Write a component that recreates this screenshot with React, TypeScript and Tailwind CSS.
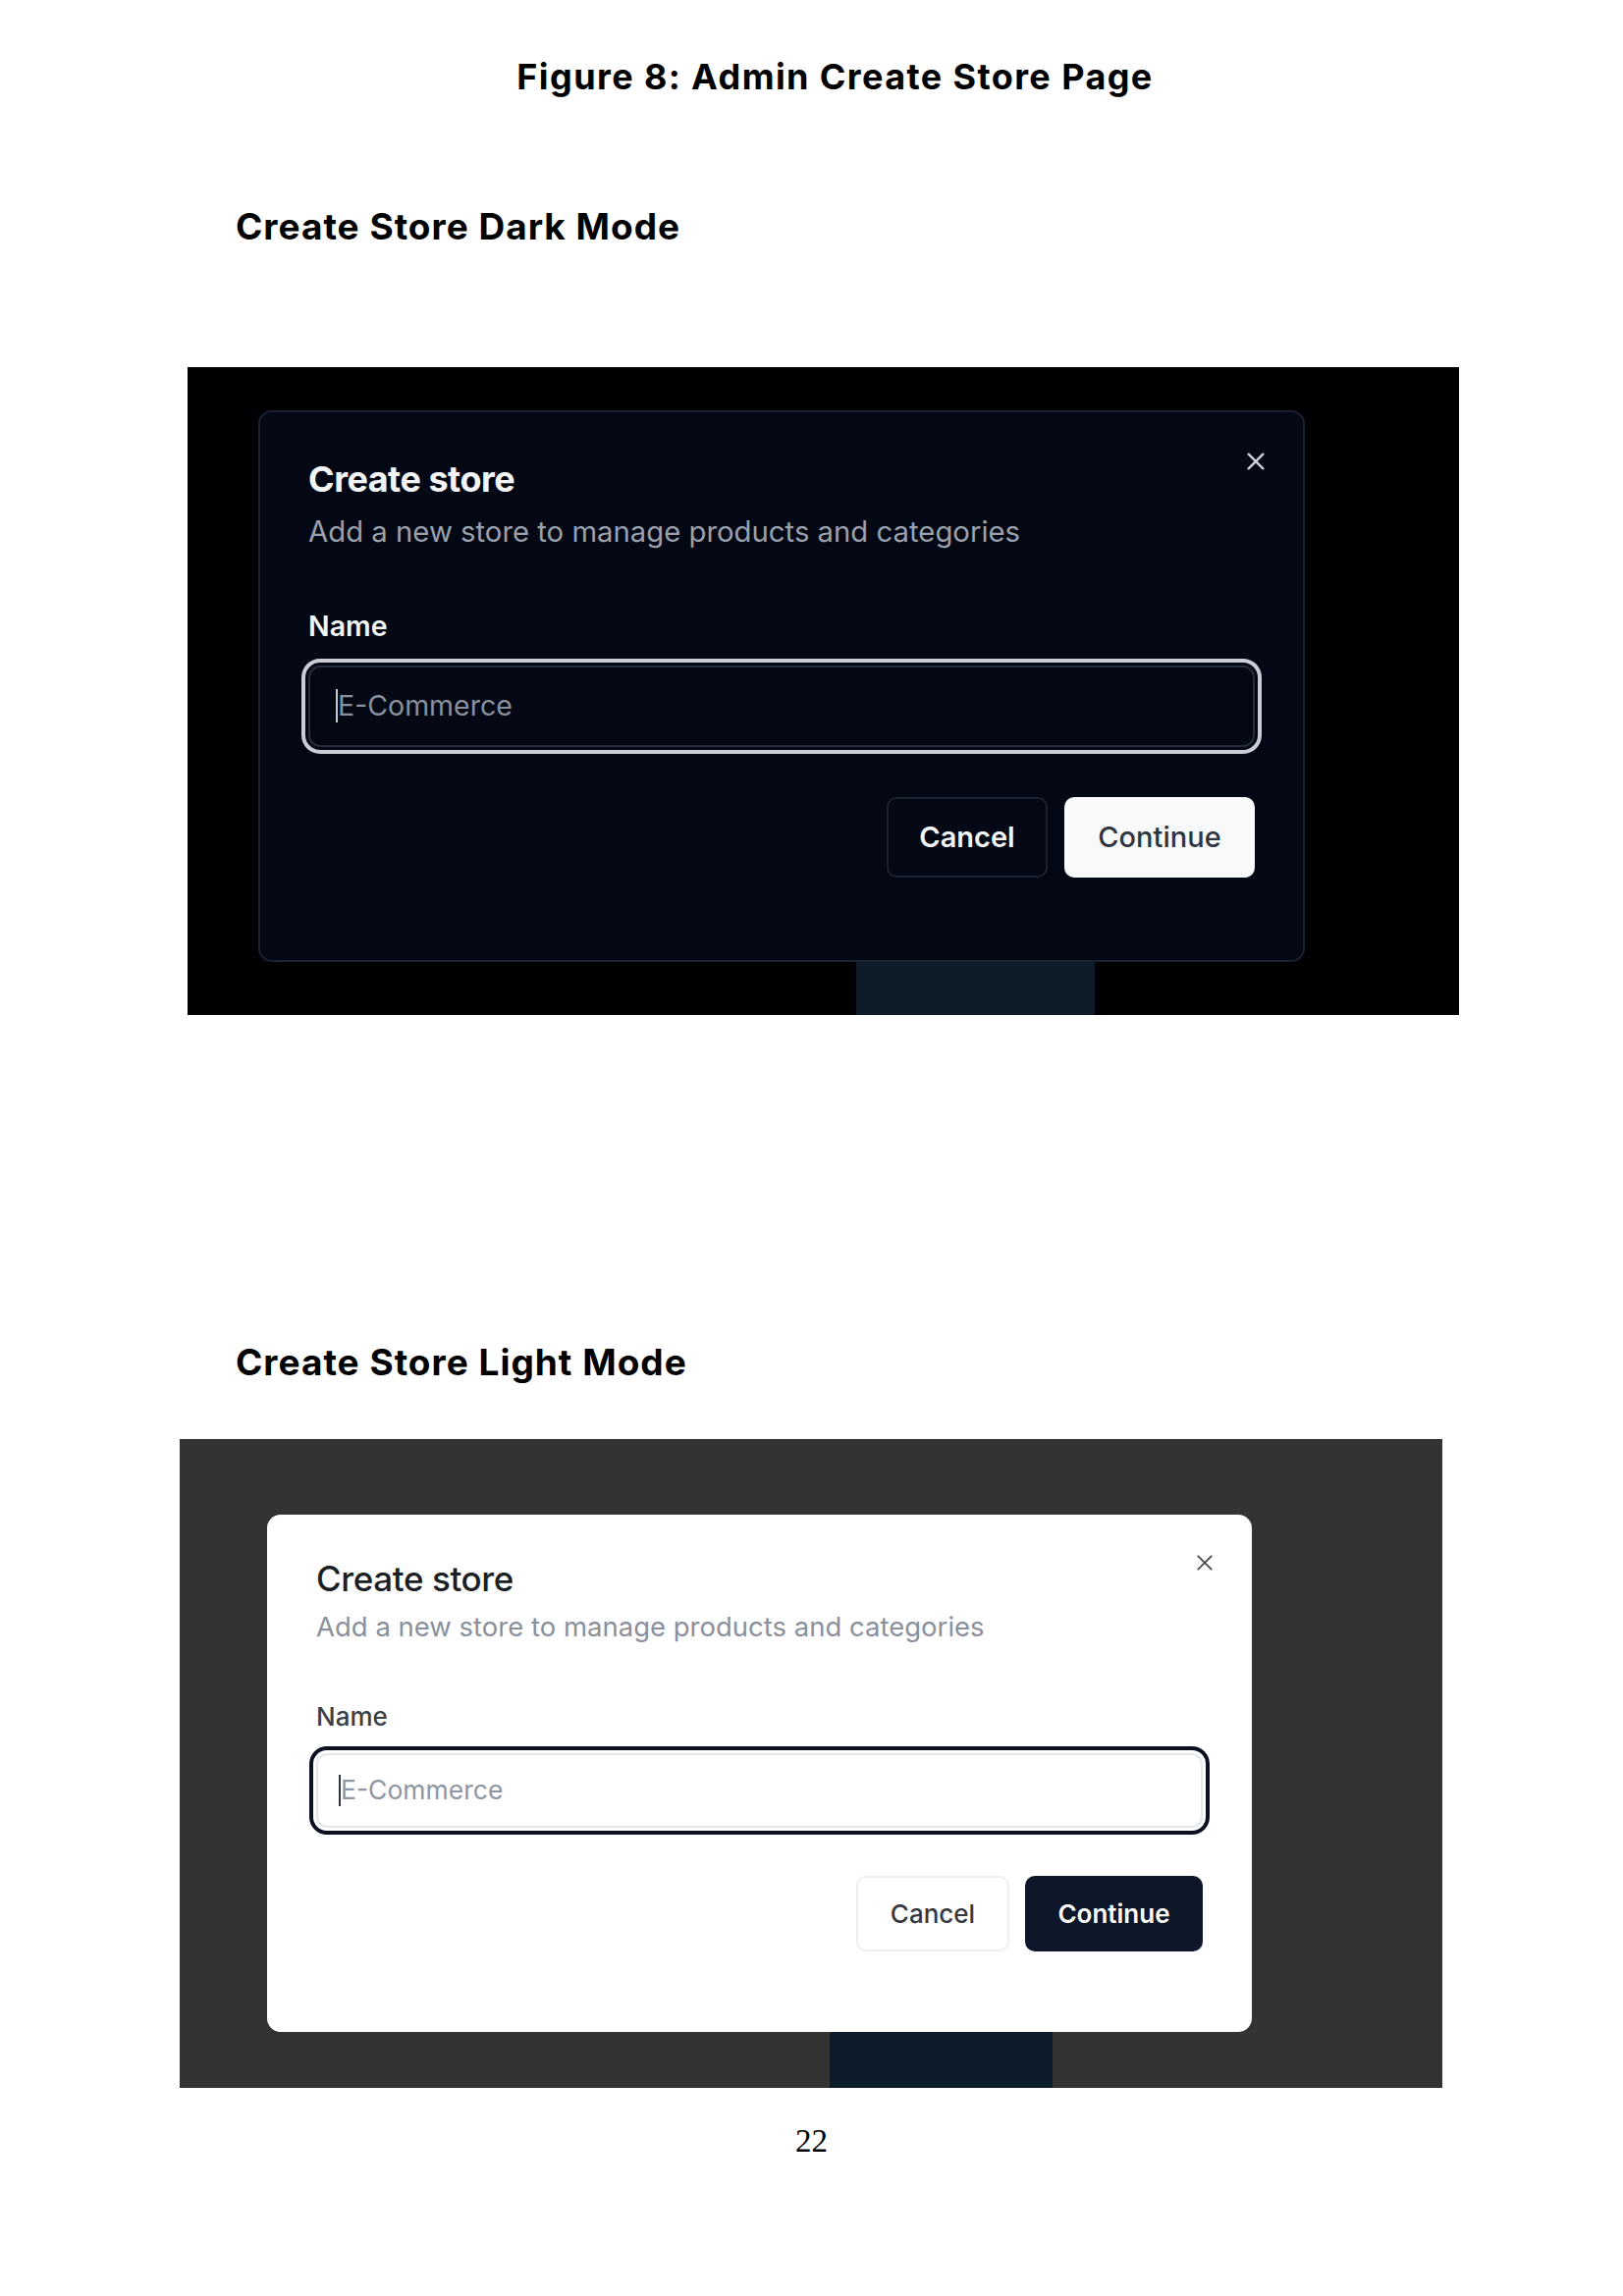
import React from "react";

const inter = { fontFamily: "Inter, 'Noto Sans', sans-serif" } as const;

function XIcon({ size, color, stroke }: { size: number; color: string; stroke: number }) {
  return (
    <svg width={size} height={size} viewBox="0 0 24 24" fill="none" stroke={color} strokeWidth={stroke} strokeLinecap="round">
      <path d="M4 4 L20 20" />
      <path d="M20 4 L4 20" />
    </svg>
  );
}

function DarkShot() {
  return (
    <div className="ml-[191px] mt-[125px] flex h-[660px] w-[1295px] flex-col bg-[#010104]">
      <div className="relative ml-[72px] mt-[44px] flex h-[562px] w-[1066px] shrink-0 flex-col rounded-[14px] border-2 border-[#1a2130] bg-[#030814] px-[49px] pt-[50px]">
        <div className="absolute left-[1003px] top-[39px]">
          <XIcon size={22} color="#cfd3db" stroke={2.6} />
        </div>
        <div className="text-[36px] font-bold leading-none tracking-[-0.5px] text-[#f3f4f6]">Create store</div>
        <div className="mt-[21px] text-[29.3px] leading-none text-[#9aa1ad]">Add a new store to manage products and categories</div>
        <div className="mt-[68px] text-[28.5px] font-semibold leading-none text-[#f3f4f6]">Name</div>
        <div className="mt-[25px] flex h-[83px] items-center rounded-[12px] border-2 border-[#252d3b] bg-[#030814] pl-[26px] shadow-[0_0_0_3px_#030814,0_0_0_7px_#c9cdd6]">
          <span className="h-[34px] w-[2px] bg-[#c7cbd3]" />
          <span className="text-[28.5px] leading-none text-[#8a919e]">E-Commerce</span>
        </div>
        <div className="mt-[51px] flex justify-end gap-[17px]">
          <div className="flex h-[82px] w-[164px] items-center justify-center rounded-[10px] border-2 border-[#1a2130] bg-[#030814] text-[29px] font-semibold text-[#f3f4f6]">
            Cancel
          </div>
          <div className="flex h-[82px] w-[194px] items-center justify-center rounded-[10px] bg-[#f8f9fb] text-[29px] font-medium text-[#2f3540]">
            Continue
          </div>
        </div>
      </div>
      <div className="ml-[681px] w-[243px] flex-1 bg-[#0e1c2a]" />
    </div>
  );
}

function LightShot() {
  return (
    <div className="ml-[183px] mt-[60px] flex h-[661px] w-[1286px] flex-col bg-[#333333]">
      <div className="relative ml-[89px] mt-[77px] flex h-[527px] w-[1003px] shrink-0 flex-col rounded-[14px] bg-white px-[50px] pt-[48px]">
        <div className="absolute left-[945px] top-[39px]">
          <XIcon size={20} color="#4a4f57" stroke={2.4} />
        </div>
        <div className="text-[35px] font-medium leading-none tracking-[-0.4px] text-[#1c1f24]">Create store</div>
        <div className="mt-[18px] text-[27.5px] leading-none text-[#8a909b]">Add a new store to manage products and categories</div>
        <div className="mt-[64px] text-[26px] font-medium leading-none text-[#3a3f47]">Name</div>
        <div className="mt-[24px] flex h-[76px] items-center rounded-[11px] border-2 border-[#e3e7ee] bg-white pl-[21px] shadow-[0_0_0_3px_#ffffff,0_0_0_7px_#0b1120]">
          <span className="h-[32px] w-[2px] bg-[#2b3340]" />
          <span className="text-[26.5px] leading-none text-[#8e96a3]">E-Commerce</span>
        </div>
        <div className="mt-[49px] flex justify-end gap-[16px]">
          <div className="flex h-[77px] w-[156px] items-center justify-center rounded-[10px] border-2 border-[#eceff3] bg-white text-[26px] font-medium text-[#353a42]">
            Cancel
          </div>
          <div className="flex h-[77px] w-[181px] items-center justify-center rounded-[10px] bg-[#0e1629] text-[26px] font-semibold text-white">
            Continue
          </div>
        </div>
      </div>
      <div className="ml-[662px] w-[227px] flex-1 bg-[#0d1c2b]" />
    </div>
  );
}

export default function App() {
  return (
    <div className="flex h-[2339px] w-[1653px] flex-col bg-white text-black" style={inter}>
      <div className="mt-[60px] pl-[48px] text-center text-[36px] font-bold leading-none tracking-[1.4px]">Figure 8: Admin Create Store Page</div>
      <div className="ml-[240px] mt-[116px] text-[37px] font-bold leading-none tracking-[1px]">Create Store Dark Mode</div>
      <DarkShot />
      <div className="ml-[240px] mt-[335px] text-[37px] font-bold leading-none tracking-[1px]">Create Store Light Mode</div>
      <LightShot />
      <div className="mt-[38px] text-center text-[33px] leading-none" style={{ fontFamily: "'Liberation Serif', serif" }}>
        22
      </div>
    </div>
  );
}
